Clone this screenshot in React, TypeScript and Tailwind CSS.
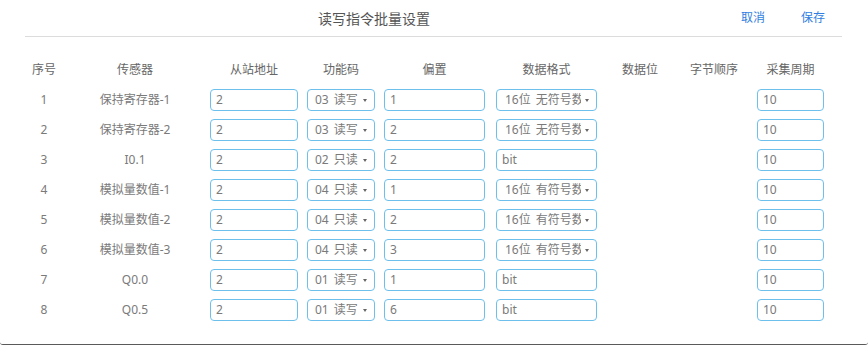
import React from "react";

type Row = {
  no: number;
  name: string;
  addr: string;
  fn: string;
  offset: string;
  fmt: string;
  fmtSelect: boolean;
  period: string;
};

const rows: Row[] = [
  { no: 1, name: "保持寄存器-1", addr: "2", fn: "03 读写", offset: "1", fmt: "16位 无符号数", fmtSelect: true, period: "10" },
  { no: 2, name: "保持寄存器-2", addr: "2", fn: "03 读写", offset: "2", fmt: "16位 无符号数", fmtSelect: true, period: "10" },
  { no: 3, name: "I0.1", addr: "2", fn: "02 只读", offset: "2", fmt: "bit", fmtSelect: false, period: "10" },
  { no: 4, name: "模拟量数值-1", addr: "2", fn: "04 只读", offset: "1", fmt: "16位 有符号数", fmtSelect: true, period: "10" },
  { no: 5, name: "模拟量数值-2", addr: "2", fn: "04 只读", offset: "2", fmt: "16位 有符号数", fmtSelect: true, period: "10" },
  { no: 6, name: "模拟量数值-3", addr: "2", fn: "04 只读", offset: "3", fmt: "16位 有符号数", fmtSelect: true, period: "10" },
  { no: 7, name: "Q0.0", addr: "2", fn: "01 读写", offset: "1", fmt: "bit", fmtSelect: false, period: "10" },
  { no: 8, name: "Q0.5", addr: "2", fn: "01 读写", offset: "6", fmt: "bit", fmtSelect: false, period: "10" },
];

function Field({ value, className }: { value: string; className: string }) {
  return (
    <div
      className={`h-[22px] border border-[#6ec0ec] rounded-[4px] pl-[5px] flex items-center text-[12px] text-[#7a7a7a] bg-white ${className}`}
    >
      {value}
    </div>
  );
}

function Select({ value, className, textW }: { value: string; className: string; textW: string }) {
  return (
    <div
      className={`h-[22px] border border-[#6ec0ec] rounded-[4px] flex items-center text-[12px] text-[#7a7a7a] bg-white relative ${className}`}
    >
      <span className={`overflow-hidden whitespace-nowrap [word-spacing:2px] ${textW}`}>{value}</span>
      <span className="absolute right-[7px] top-[9px] w-0 h-0 border-l-[2px] border-r-[2px] border-t-[3px] border-l-transparent border-r-transparent border-t-[#666]" />
    </div>
  );
}

export default function App() {
  return (
    <div
      className="w-[868px] h-[345px] bg-white border-b border-[#5a5a5a] rounded-b-[3px] overflow-hidden"
      style={{ fontFamily: '"Noto Sans", "Noto Sans CJK SC", sans-serif' }}
    >
      <div className="h-[36px] relative">
        <div className="absolute left-[318px] top-0 h-[36px] flex items-center text-[14px] text-[#555]">
          读写指令批量设置
        </div>
        <div className="absolute left-[741px] top-0 h-[36px] flex items-center text-[12px] text-[#2f7ee0]">
          取消
        </div>
        <div className="absolute left-[801px] top-0 h-[36px] flex items-center text-[12px] text-[#2f7ee0]">
          保存
        </div>
      </div>
      <div className="ml-[25px] w-[817px] h-px bg-[#dcdcdc]" />
      <div className="mt-[18px] pl-[20px]">
        <div className="h-[30px] flex items-center text-[12px] text-[#666]">
          <div className="w-[48px] text-center">序号</div>
          <div className="w-[134px] text-center">传感器</div>
          <div className="ml-[8px] w-[88px] text-center">从站地址</div>
          <div className="ml-[9px] w-[68px] text-center">功能码</div>
          <div className="ml-[9px] w-[101px] text-center">偏置</div>
          <div className="ml-[11px] w-[101px] text-center">数据格式</div>
          <div className="w-[86px] text-center">数据位</div>
          <div className="w-[62px] text-center">字节顺序</div>
          <div className="ml-[12px] w-[67px] text-center">采集周期</div>
        </div>
        {rows.map((r) => (
          <div key={r.no} className="h-[30px] flex items-center text-[12px] text-[#7a7a7a]">
            <div className="w-[48px] text-center">{r.no}</div>
            <div className="w-[134px] text-center">{r.name}</div>
            <Field value={r.addr} className="ml-[8px] w-[88px]" />
            <Select value={r.fn} className="ml-[9px] w-[68px] pl-[7px]" textW="w-[48px]" />
            <Field value={r.offset} className="ml-[9px] w-[101px]" />
            {r.fmtSelect ? (
              <Select value={r.fmt} className="ml-[11px] w-[101px] pl-[8px]" textW="w-[76px]" />
            ) : (
              <Field value={r.fmt} className="ml-[11px] w-[101px]" />
            )}
            <div className="w-[86px]" />
            <div className="w-[62px]" />
            <Field value={r.period} className="ml-[12px] w-[67px]" />
          </div>
        ))}
      </div>
    </div>
  );
}
